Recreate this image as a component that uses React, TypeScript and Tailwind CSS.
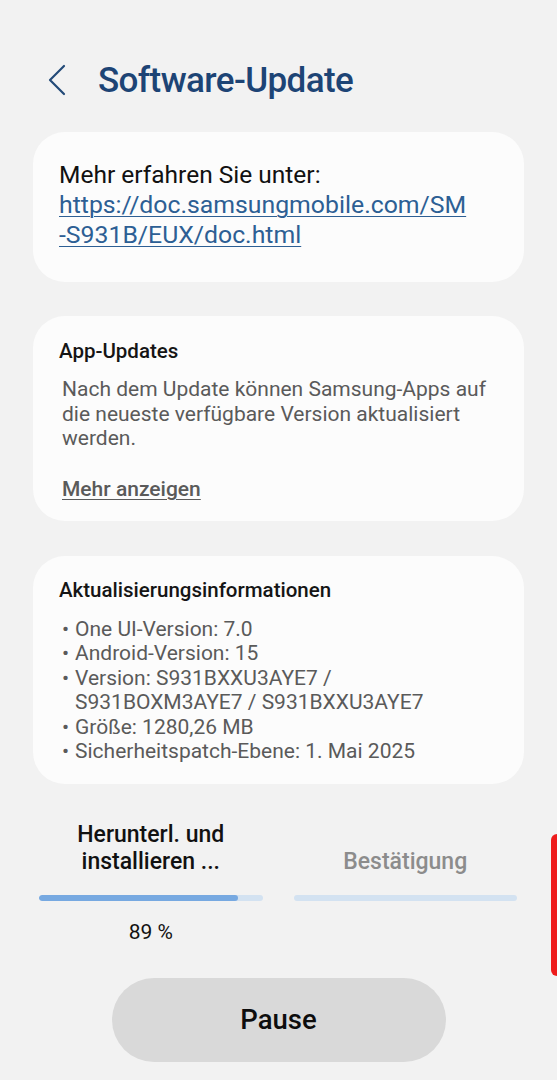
import React from "react";

export default function App() {
  return (
    <div
      className="relative w-[557px] h-[1080px] overflow-hidden bg-[#f2f2f2]"
      style={{ fontFamily: "Roboto, 'Noto Sans', sans-serif" }}
    >
      {/* Header */}
      <div className="flex items-center h-[60px] mt-[50px] pl-[46px]">
        <svg width="22" height="32" viewBox="0 0 22 32" className="shrink-0">
          <path d="M18 2 L4 16 L18 30" fill="none" stroke="#234a78" strokeWidth="2.2" strokeLinecap="round" strokeLinejoin="round" />
        </svg>
        <h1 className="ml-[30px] text-[35px] font-medium tracking-[-0.6px] text-[#1d4475] leading-none">
          Software-Update
        </h1>
      </div>

      {/* Card 1 */}
      <div className="mx-[33px] mt-[22px] rounded-[32px] bg-[#fcfcfc] pl-[26px] pr-[20px] pt-[28px] pb-[32px]">
        <p className="text-[24.5px] leading-[30px] text-[#111]">Mehr erfahren Sie unter:</p>
        <p className="text-[24.8px] leading-[30px] text-[#2d5f94] underline underline-offset-[3px] decoration-[1px] whitespace-nowrap">
          https://doc.samsungmobile.com/SM
          <br />
          -S931B/EUX/doc.html
        </p>
      </div>

      {/* Card 2 */}
      <div className="mx-[33px] mt-[34px] rounded-[32px] bg-[#fcfcfc] pl-[26px] pr-[20px] pt-[23px] pb-[20px]">
        <p className="text-[20.5px] leading-[24px] font-medium text-[#151515]">App-Updates</p>
        <p className="mt-[14px] ml-[3px] text-[21px] leading-[24.5px] text-[#5a5a5a] whitespace-nowrap">
          Nach dem Update können Samsung-Apps auf
          <br />
          die neueste verfügbare Version aktualisiert
          <br />
          werden.
        </p>
        <p className="mt-[26px] ml-[3px] text-[21px] leading-[24px] font-medium text-[#5a5a5a] underline underline-offset-[3px] decoration-[1px]">
          Mehr anzeigen
        </p>
      </div>

      {/* Card 3 */}
      <div className="mx-[33px] mt-[35px] rounded-[32px] bg-[#fcfcfc] pl-[26px] pr-[20px] pt-[22px] pb-[20px]">
        <p className="text-[20.5px] leading-[24px] font-medium text-[#151515]">Aktualisierungsinformationen</p>
        <ul className="mt-[15px] text-[21px] leading-[24.6px] text-[#5a5a5a]">
          {[
            ["One UI-Version: 7.0"],
            ["Android-Version: 15"],
            ["Version: S931BXXU3AYE7 /", "S931BOXM3AYE7 / S931BXXU3AYE7"],
            ["Größe: 1280,26 MB"],
            ["Sicherheitspatch-Ebene: 1. Mai 2025"],
          ].map((lines, i) => (
            <li key={i} className="flex">
              <span className="w-[16px] shrink-0 pl-[3px]">•</span>
              <span className="whitespace-nowrap">
                {lines.map((l, j) => (
                  <span key={j} className="block">
                    {l}
                  </span>
                ))}
              </span>
            </li>
          ))}
        </ul>
      </div>

      {/* Progress */}
      <div className="mt-[37px] pl-[39px] pr-[40px] grid grid-cols-2 gap-x-[31px]">
        <div className="flex flex-col items-center">
          <p className="text-[23px] leading-[27px] font-medium text-[#111] text-center whitespace-nowrap">
            Herunterl. und
            <br />
            installieren ...
          </p>
        </div>
        <div className="flex flex-col items-center justify-end">
          <p className="text-[23px] leading-[27px] font-medium text-[#8c8c8c] text-center">Bestätigung</p>
        </div>
        <div className="mt-[20px] h-[6px] rounded-full bg-[#d3e2f1] overflow-hidden">
          <div className="h-full rounded-full bg-[#77a9e1]" style={{ width: "89%" }} />
        </div>
        <div className="mt-[20px] h-[6px] rounded-full bg-[#d3e2f1]" />
        <p className="mt-[19px] text-center text-[21px] leading-[24px] text-[#111]">89 %</p>
        <div />
      </div>

      {/* Pause button */}
      <div className="flex justify-center mt-[34px]">
        <button className="w-[334px] h-[84px] rounded-full bg-[#d9d9d9] text-[27.5px] font-medium text-[#0d0d0d]">
          Pause
        </button>
      </div>

      {/* Scrollbar indicator */}
      <div className="absolute right-0 top-[834px] w-[6px] h-[142px] rounded-l-full bg-[#ee1c1c]" />
    </div>
  );
}
